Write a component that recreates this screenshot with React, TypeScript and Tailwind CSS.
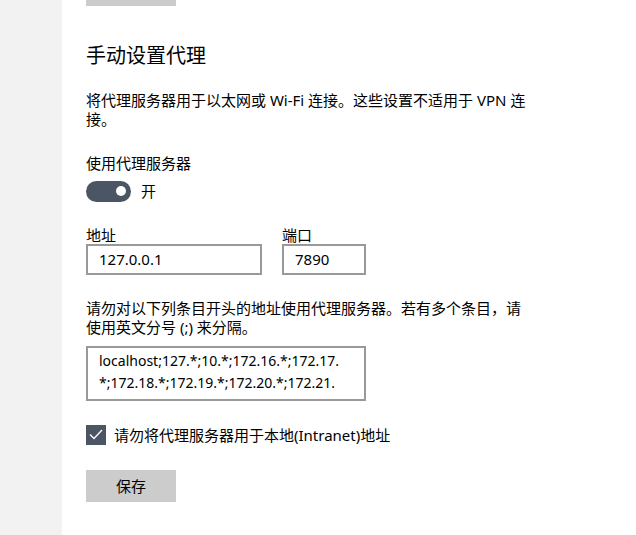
import React from 'react';

const font = {
  fontFamily: '"Noto Sans", "Noto Sans CJK SC", sans-serif',
};

const ProxyToggle = ({ on }: { on: boolean }) => (
  <div className="flex items-center gap-[10px]">
    <div className="w-[45px] h-[21px] rounded-full bg-[#4b5563] flex items-center justify-end pr-[5px]">
      <div className="w-[10px] h-[10px] rounded-full bg-white" />
    </div>
    <span className="text-[15px] text-black">{on ? '开' : '关'}</span>
  </div>
);

const TextField = ({ label, value, width }: { label: string; value: string; width: string }) => (
  <div className="flex flex-col">
    <label className="text-[15px] leading-[18px] text-black">{label}</label>
    <div className={`${width} h-[31px] border-2 border-[#999999] bg-white flex items-center px-[11px] text-[15px] text-black`}>
      {value}
    </div>
  </div>
);

export default function App() {
  return (
    <div className="flex w-[636px] h-[535px] bg-white overflow-hidden" style={font}>
      <aside className="w-[62px] h-full bg-[#f2f2f2] shrink-0" />
      <main className="flex flex-col pl-[24px] w-[470px]">
        <div className="w-[90px] h-[6px] bg-[#cccccc]" />

        <h2 className="mt-[36px] text-[20px] leading-[28px] text-black font-normal">手动设置代理</h2>

        <p className="mt-[21px] text-[15px] leading-[19px] text-black w-[446px]">
          将代理服务器用于以太网或 Wi-Fi 连接。这些设置不适用于 VPN 连接。
        </p>

        <p className="mt-[24px] text-[15px] leading-[20px] text-black">使用代理服务器</p>
        <div className="mt-[7px]">
          <ProxyToggle on />
        </div>

        <div className="mt-[23px] flex gap-[20px]">
          <TextField label="地址" value="127.0.0.1" width="w-[176px]" />
          <TextField label="端口" value="7890" width="w-[84px]" />
        </div>

        <p className="mt-[24px] text-[15px] leading-[19px] text-black w-[446px]">
          请勿对以下列条目开头的地址使用代理服务器。若有多个条目，请使用英文分号 (;) 来分隔。
        </p>

        <div className="mt-[9px] w-[280px] h-[55px] border-2 border-[#999999] px-[11px] pt-[2px] text-[14px] leading-[22px] text-black overflow-hidden">
          <div>localhost;127.*;10.*;172.16.*;172.17.</div>
          <div>*;172.18.*;172.19.*;172.20.*;172.21.</div>
        </div>

        <label className="mt-[23px] flex items-center gap-[8px]">
          <span className="w-[20px] h-[20px] bg-[#4b5563] flex items-center justify-center">
            <svg width="14" height="11" viewBox="0 0 14 11" fill="none">
              <path d="M1 5.5 L5 9.5 L13 1" stroke="white" strokeWidth="1.3" />
            </svg>
          </span>
          <span className="text-[15px] text-black">请勿将代理服务器用于本地(Intranet)地址</span>
        </label>

        <button className="mt-[24px] w-[90px] h-[32px] bg-[#cccccc] text-[15px] text-black">保存</button>
      </main>
    </div>
  );
}
